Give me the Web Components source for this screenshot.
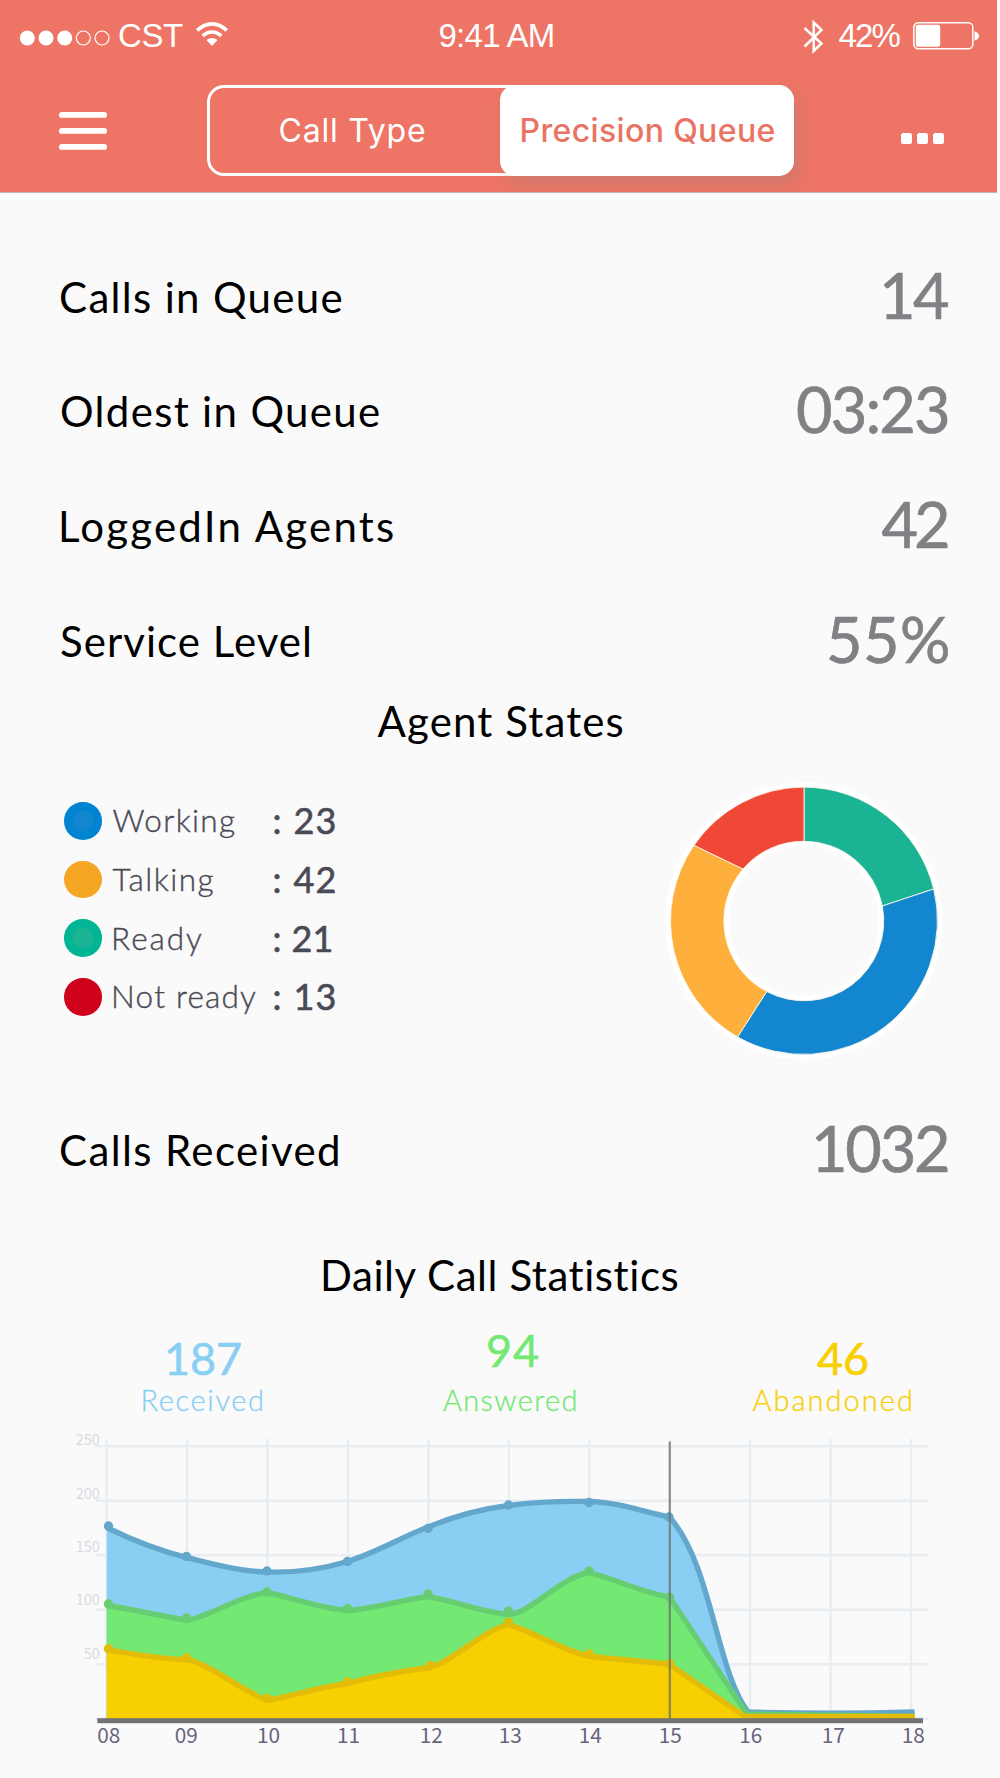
<!DOCTYPE html>
<html lang="en">
<head>
<meta charset="utf-8">
<title>Precision Queue</title>
<style>
  body {
    background: #fafafa;
    font-family: Lato, "Liberation Sans", sans-serif;
    margin: 0;
  }
</style>
</head>
<body>
<queue-app></queue-app>

<script>
// Text set to an exact ink width by tracking
// <fit-text width="281" size="42" weight="400">Label</fit-text>
class FitText extends HTMLElement {
  constructor() {
    super();

    const template = document.createElement( 'template' );
    template.innerHTML = /* template */ `
      <style>
        :host {
          display: block;
          flex: none;
          white-space: nowrap;
        }

        span { display: block; }
      </style>
      <span><slot></slot></span>
    `;

    // Root
    this.attachShadow( {mode: 'open'} );
    this.shadowRoot.appendChild( template.content.cloneNode( true ) );
    this.$span = this.shadowRoot.querySelector( 'span' );
  }

  // Measure ink, spread the difference between letters
  _render() {
    const text = this.textContent.trim();
    const width = parseFloat( this.getAttribute( 'width' ) );
    const size = this.getAttribute( 'size' ) + 'px';
    const weight = this.getAttribute( 'weight' ) || '400';
    this.style.fontSize = size;
    this.style.fontWeight = weight;

    const context = document.createElement( 'canvas' ).getContext( '2d' );
    context.font = `${weight} ${size} ${getComputedStyle( this ).fontFamily}`;
    const ink = context.measureText( text );
    const natural = ink.actualBoundingBoxLeft + ink.actualBoundingBoxRight;

    this.style.width = width + 'px';
    this.$span.style.letterSpacing = ( width - natural ) / ( text.length - 1 ) + 'px';
    this.$span.style.marginLeft = ink.actualBoundingBoxLeft + 'px';
  }

  // Setup
  connectedCallback() {
    this._render();
  }
}

window.customElements.define( 'fit-text', FitText );

class StatusBar extends HTMLElement {
  constructor() {
    super();

    const template = document.createElement( 'template' );
    template.innerHTML = /* template */ `
      <style>
        :host {
          align-items: center;
          box-sizing: border-box;
          color: #ffffff;
          display: flex;
          font-family: "Liberation Sans", Arial, sans-serif;
          height: 72px;
          line-height: 72px;
          padding: 0 19px 0 19px;
        }

        svg { display: block; flex: none; }
        .signal { margin: 4px 9px 0 0; }
        .wifi { margin: -4px 210.5px 0 12px; }
        .bluetooth { margin: 2px 13.5px 0 248.5px; }
        .battery { margin-left: 12px; }
      </style>
      <svg class="signal" width="91" height="16" viewBox="0 0 91 16" fill="#fff">
        <circle cx="8.3" cy="8" r="7.5"/>
        <circle cx="27" cy="8" r="7.5"/>
        <circle cx="45.7" cy="8" r="7.5"/>
        <g fill="none" stroke="#fff" stroke-width="1.2">
          <circle cx="64.3" cy="8" r="7"/>
          <circle cx="83" cy="8" r="7"/>
        </g>
      </svg>
      <fit-text width="64" size="33">CST</fit-text>
      <svg class="wifi" width="34" height="26" viewBox="0 0 34 26">
        <g fill="none" stroke="#fff" stroke-width="3.6">
          <path d="M2.2 9.4 Q9.4 2.9 17 2.9 T31.8 9.4"/>
          <path d="M7.6 14.8 Q12 11 17 11 T26.4 14.8"/>
        </g>
        <path fill="#fff" d="M11.4 19 Q17 14.8 22.6 19 L17 25Z"/>
      </svg>
      <fit-text width="115" size="33">9:41 AM</fit-text>
      <svg class="bluetooth" width="22" height="36" viewBox="0 0 22 36" fill="none" stroke="#fff" stroke-width="2.5">
        <path d="M1.5 9 L18.5 24.5 L10.7 32 V3.5 L18.5 11 L1.5 27.5"/>
      </svg>
      <fit-text width="62" size="33">42%</fit-text>
      <svg class="battery" width="66" height="28" viewBox="0 0 66 28">
        <rect x=".8" y=".8" width="59" height="26" rx="4.5" fill="none" stroke="#fff" stroke-width="1.5"/>
        <rect x="2.8" y="2.8" width="24.4" height="22" rx="2.2" fill="#fff"/>
        <path d="M61.5 9.3 Q66 11 66 14 T61.5 18.7Z" fill="#fff"/>
      </svg>
    `;

    // Root
    this.attachShadow( {mode: 'open'} );
    this.shadowRoot.appendChild( template.content.cloneNode( true ) );
  }
}

window.customElements.define( 'status-bar', StatusBar );

class NavBar extends HTMLElement {
  constructor() {
    super();

    const template = document.createElement( 'template' );
    template.innerHTML = /* template */ `
      <style>
        :host {
          align-items: flex-start;
          box-sizing: border-box;
          display: flex;
          height: 120px;
          padding: 13px 53px 0 59px;
        }

        button {
          background: none;
          border: none;
          display: block;
          padding: 0;
        }

        svg { display: block; }
        .menu { margin-top: 27px; }
        .more { margin: 48px 0 0 auto; }

        .tabs {
          border: solid 3px #ffffff;
          border-radius: 17px;
          box-sizing: border-box;
          color: #ffffff;
          display: flex;
          font-family: Inter, Lato, sans-serif;
          height: 91px;
          line-height: 86px;
          margin-left: 99.5px;
          width: 587px;
        }

        .tab {
          box-sizing: border-box;
          flex: none;
          padding-left: 70px;
          width: 290.5px;
        }

        .tab.selected {
          background: #ffffff;
          border-radius: 15px;
          box-shadow: 5px 9px 15px 0 rgba( 110, 130, 130, 0.22 );
          color: #e97463;
          height: 91px;
          line-height: 92px;
          margin: -3px -3px -3px 0;
          padding-left: 21.5px;
          width: 293.5px;
        }
      </style>
      <button class="menu" aria-label="Menu">
        <svg width="48" height="38" viewBox="0 0 48 38" fill="#fff">
          <rect width="48" height="5.8" rx="2.9"/>
          <rect y="16" width="48" height="5.8" rx="2.9"/>
          <rect y="32" width="48" height="5.8" rx="2.9"/>
        </svg>
      </button>
      <div class="tabs">
        <div class="tab"><fit-text width="145.5" size="32">Call Type</fit-text></div>
        <div class="tab selected"><fit-text width="253" size="32" weight="500">Precision Queue</fit-text></div>
      </div>
      <button class="more" aria-label="More">
        <svg width="43" height="11" viewBox="0 0 43 11" fill="#fff">
          <rect width="11" height="11" rx="2"/>
          <rect x="16" width="11" height="11" rx="2"/>
          <rect x="32" width="11" height="11" rx="2"/>
        </svg>
      </button>
    `;

    // Root
    this.attachShadow( {mode: 'open'} );
    this.shadowRoot.appendChild( template.content.cloneNode( true ) );
  }
}

window.customElements.define( 'nav-bar', NavBar );

// Label on the left, large figure on the right
class MetricRow extends HTMLElement {
  constructor() {
    super();

    const template = document.createElement( 'template' );
    template.innerHTML = /* template */ `
      <style>
        :host {
          box-sizing: border-box;
          color: #000000;
          display: flex;
          height: 100px;
          justify-content: space-between;
          line-height: 100px;
          padding: 0 52px 0 61px;
        }

        ::slotted( [slot=label] ) { margin-top: 1px; }

        ::slotted( [slot=value] ) {
          -webkit-text-stroke: 0.7px currentColor;
          color: #808184;
          margin-top: -1px;
        }
      </style>
      <slot name="label"></slot>
      <slot name="value"></slot>
    `;

    // Root
    this.attachShadow( {mode: 'open'} );
    this.shadowRoot.appendChild( template.content.cloneNode( true ) );
  }
}

window.customElements.define( 'metric-row', MetricRow );

class LegendItem extends HTMLElement {
  constructor() {
    super();

    const template = document.createElement( 'template' );
    template.innerHTML = /* template */ `
      <style>
        :host {
          align-items: center;
          color: #4a4a55;
          display: flex;
          height: 58.7px;
          line-height: 58.7px;
        }

        .dot {
          background: radial-gradient( circle, var( --inner ) 10px, var( --outer ) 11px );
          border-radius: 50%;
          flex: none;
          height: 37.6px;
          width: 37.6px;
        }

        .label {
          -webkit-text-stroke: 0.4px currentColor;
          box-sizing: border-box;
          flex: none;
          padding-left: var( --indent, 11px );
          width: 173px;
        }

        ::slotted( [slot=value] ) { -webkit-text-stroke: 0.6px currentColor; }
      </style>
      <div class="dot"></div>
      <div class="label"><slot name="label"></slot></div>
      <slot name="value"></slot>
    `;

    // Root
    this.attachShadow( {mode: 'open'} );
    this.shadowRoot.appendChild( template.content.cloneNode( true ) );
  }
}

window.customElements.define( 'legend-item', LegendItem );

class DonutChart extends HTMLElement {
  constructor() {
    super();

    const template = document.createElement( 'template' );
    template.innerHTML = /* template */ `
      <style>
        :host { display: block; flex: none; }
        svg { display: block; }
      </style>
      <svg width="280" height="280" viewBox="-140 -140 280 280">
        <circle r="106.7" fill="none" stroke="#fff" stroke-width="64"/>
        <g stroke="#fdf6e8" stroke-width=".9">
          <path fill="#1ab394" d="M0 -133.9 A133.9 133.9 0 0 1 129.7 -32 L78.3 -15 A79.7 79.7 0 0 0 0 -79.7Z"/>
          <path fill="#1386d0" d="M129.7 -32 A133.9 133.9 0 0 1 -66.5 116 L-37.3 70.5 A79.7 79.7 0 0 0 78.3 -15Z"/>
          <path fill="#ffaf3c" d="M-66.5 116 A133.9 133.9 0 0 1 -110 -75.7 L-61 -52 A79.7 79.7 0 0 0 -37.3 70.5Z"/>
          <path fill="#f04836" d="M-110 -75.7 A133.9 133.9 0 0 1 0 -133.9 V-79.7 A79.7 79.7 0 0 0 -61 -52Z"/>
        </g>
      </svg>
    `;

    // Root
    this.attachShadow( {mode: 'open'} );
    this.shadowRoot.appendChild( template.content.cloneNode( true ) );
  }
}

window.customElements.define( 'donut-chart', DonutChart );

// Figure above its caption
class CallStat extends HTMLElement {
  constructor() {
    super();

    const template = document.createElement( 'template' );
    template.innerHTML = /* template */ `
      <style>
        :host { display: block; flex: none; }

        .value {
          -webkit-text-stroke: 0.6px currentColor;
          display: flex;
          height: 51px;
          line-height: 51px;
          padding-left: var( --indent, 0 );
        }

        .label {
          -webkit-text-stroke: 0.3px currentColor;
          line-height: 32px;
        }
      </style>
      <div class="value"><slot name="value"></slot></div>
      <div class="label"><slot name="label"></slot></div>
    `;

    // Root
    this.attachShadow( {mode: 'open'} );
    this.shadowRoot.appendChild( template.content.cloneNode( true ) );
  }
}

window.customElements.define( 'call-stat', CallStat );

class AreaChart extends HTMLElement {
  constructor() {
    super();

    const template = document.createElement( 'template' );
    template.innerHTML = /* template */ `
      <style>
        :host { display: block; }

        svg {
          display: block;
          font-family: "Noto Sans CJK SC", "Noto Sans", sans-serif;
        }

        .grid { stroke: #e8edf1; stroke-width: 2.4; }
        .scale { fill: #d9d9df; font-size: 14.5px; text-anchor: end; }
        .hours { fill: #67647c; font-size: 20.8px; text-anchor: middle; }
        .line { fill: none; stroke-width: 5.4; }
      </style>
      <svg width="1000" height="364" viewBox="0 1414 1000 364">
        <g class="grid"></g>
        <g class="scale"></g>
        <g class="areas"></g>
        <path d="M669.8 1441.5 V1719" stroke="#6b6b6b" stroke-opacity=".75" stroke-width="2.2"/>
        <rect x="97.3" y="1718.2" width="825.7" height="5" fill="#727272"/>
        <g class="hours"></g>
      </svg>
    `;

    // Root
    this.attachShadow( {mode: 'open'} );
    this.shadowRoot.appendChild( template.content.cloneNode( true ) );
    this._render();
  }

  _render() {
    const hours = [
      ['08', 108.7], ['09', 186.2], ['10', 268.5], ['11', 348.5], ['12', 431.3], ['13', 510.3],
      ['14', 590.3], ['15', 670.3], ['16', 750.8], ['17', 833.3], ['18', 913.3]
    ];
    const scale = [[250, 1445], [200, 1498.7], [150, 1552], [100, 1605], [50, 1658.7]];
    const series = [
      {
        fill: '#89cff3',
        line: '#64a7cd',
        path: 'M106.7 1527.5 C128 1538 160 1551 187 1557.5 C216 1565 240 1571.5 267 1572 C296 1573 322 1569 347.5 1561.5 C375 1553 400 1538 428 1527 C455 1516 480 1509 508.5 1505.5 C535 1502 562 1501 589 1501.5 C617 1502 644 1512 669.5 1517 C712 1565 716 1670 748 1712 C800 1713.5 860 1713.5 914.5 1712',
        dots: [[108.5, 1526], [186.5, 1556.5], [267, 1571], [347.5, 1561.5], [428, 1528.5], [508.5, 1505], [589, 1502.5], [669, 1517]]
      },
      {
        fill: '#73e873',
        line: '#67cd73',
        path: 'M106.7 1605 L187 1620.5 C210 1616 242 1595 267 1592.5 C290 1597 325 1610 350 1610.5 C375 1608 402 1600 428 1596.5 C455 1601 480 1612 508.5 1614.5 C530 1614 562 1576 589 1572.5 C615 1579 644 1593 669.5 1597 L747 1714 L914.5 1716.5',
        dots: [[108.5, 1604], [186.5, 1618], [267, 1592], [347.5, 1608.5], [428, 1594], [508.5, 1611], [589, 1571], [669.5, 1597]]
      },
      {
        fill: '#f8cf00',
        line: '#e2bc08',
        path: 'M106.7 1649.5 C133 1654 160 1659 187 1659.5 C205 1662 242 1690 267 1700.5 C293 1696 320 1687 347.5 1683.5 C375 1676 402 1671 430 1667.5 C450 1663 482 1631 508.5 1624.5 C535 1632 565 1652 589 1656 C615 1659.5 644 1661 669.5 1664.5 L745 1716.5 H914.5',
        dots: [[108.5, 1648.7], [186.5, 1658], [267, 1698.3], [347.5, 1682], [430.5, 1665.5], [508.5, 1622.5], [589, 1654], [669.5, 1663.5]]
      }
    ];

    let grid = '';
    for( let c = 0; c < 11; c++ ) {
      grid += `<path d="M${106.7 + c * 80.43} 1439 V1720"/>`;
    }
    for( let r = 0; r < 6; r++ ) {
      grid += `<path d="M95.5 ${1446.3 + r * 54.5} H928"/>`;
    }

    const root = this.shadowRoot;
    root.querySelector( '.grid' ).innerHTML = grid;
    root.querySelector( '.scale' ).innerHTML = scale
      .map( ( [label, y] ) => `<text x="99.8" y="${y}">${label}</text>` ).join( '' );
    root.querySelector( '.hours' ).innerHTML = hours
      .map( ( [label, x] ) => `<text x="${x}" y="1743.3">${label}</text>` ).join( '' );
    root.querySelector( '.areas' ).innerHTML = series.map( ( item ) => `
      <path d="${item.path} V1719 H106.7Z" fill="${item.fill}"/>
      <path class="line" d="${item.path}" stroke="${item.line}"/>
      ${item.dots.map( ( [x, y] ) => `<circle cx="${x}" cy="${y}" r="4.7" fill="${item.line}"/>` ).join( '' )}
    ` ).join( '' );
  }
}

window.customElements.define( 'area-chart', AreaChart );

class QueueApp extends HTMLElement {
  constructor() {
    super();

    const template = document.createElement( 'template' );
    template.innerHTML = /* template */ `
      <style>
        :host {
          display: flex;
          flex-direction: column;
          height: 1778px;
          overflow: hidden;
          width: 1000px;
        }

        header {
          background: #ee7565;
          border-bottom: solid 1px #c4b4b1;
          height: 192px;
          overflow: hidden;
          width: 997px;
        }

        .metrics {
          display: flex;
          flex-direction: column;
          gap: 14.8px;
          padding-top: 52.6px;
        }

        h2 {
          box-sizing: border-box;
          color: #000000;
          display: flex;
          font-weight: 400;
          height: 60px;
          justify-content: center;
          line-height: 60px;
          margin: 0;
          padding-top: 1.4px;
        }

        .states {
          align-items: flex-start;
          display: flex;
          justify-content: space-between;
          margin-top: 31px;
          padding: 0 55.7px 0 64px;
        }

        .legend { padding-top: 10.4px; }
        .legend legend-item:nth-child( n + 3 ) { --indent: 12.5px; }
        .received { margin-top: 38px; }
        .daily { margin-top: 45px; padding-left: 3px; }

        .stats {
          box-sizing: border-box;
          display: flex;
          height: 110px;
          padding: 29px 0 0 143.5px;
        }

        .stats call-stat:nth-child( 1 ) { --indent: 23.5px; color: #89cff3; }
        .stats call-stat:nth-child( 2 ) { --indent: 45px; color: #73e873; margin-left: 181px; }
        .stats call-stat:nth-child( 3 ) { --indent: 64.5px; color: #f8cf00; margin-left: 177px; }
        .raised { margin-top: -8px; }
      </style>
      <header>
        <status-bar></status-bar>
        <nav-bar></nav-bar>
      </header>
      <section class="metrics">
        <metric-row>
          <fit-text slot="label" width="280.5" size="42">Calls in Queue</fit-text>
          <fit-text slot="value" width="64" size="63">14</fit-text>
        </metric-row>
        <metric-row>
          <fit-text slot="label" width="318" size="42">Oldest in Queue</fit-text>
          <fit-text slot="value" width="151" size="63">03:23</fit-text>
        </metric-row>
        <metric-row>
          <fit-text slot="label" width="333.5" size="42">LoggedIn Agents</fit-text>
          <fit-text slot="value" width="66.5" size="63">42</fit-text>
        </metric-row>
        <metric-row>
          <fit-text slot="label" width="248" size="42">Service Level</fit-text>
          <fit-text slot="value" width="119" size="63">55%</fit-text>
        </metric-row>
      </section>
      <h2><fit-text width="245" size="42">Agent States</fit-text></h2>
      <section class="states">
        <div class="legend">
          <legend-item style="--outer: #0084d1; --inner: #1386d0">
            <fit-text slot="label" width="122.3" size="31.5" weight="300">Working</fit-text>
            <fit-text slot="value" width="60" size="36">: 23</fit-text>
          </legend-item>
          <legend-item style="--outer: #f5a623; --inner: #f5a623">
            <fit-text slot="label" width="101" size="31.5" weight="300">Talking</fit-text>
            <fit-text slot="value" width="60" size="36">: 42</fit-text>
          </legend-item>
          <legend-item style="--outer: #00b494; --inner: #1ab394">
            <fit-text slot="label" width="88" size="31.5" weight="300">Ready</fit-text>
            <fit-text slot="value" width="57" size="36">: 21</fit-text>
          </legend-item>
          <legend-item style="--outer: #d0021b; --inner: #d0021b">
            <fit-text slot="label" width="142" size="31.5" weight="300">Not ready</fit-text>
            <fit-text slot="value" width="60" size="36">: 13</fit-text>
          </legend-item>
        </div>
        <donut-chart></donut-chart>
      </section>
      <metric-row class="received">
        <fit-text slot="label" width="277" size="42">Calls Received</fit-text>
        <fit-text slot="value" width="132" size="63">1032</fit-text>
      </metric-row>
      <h2 class="daily"><fit-text width="357" size="42">Daily Call Statistics</fit-text></h2>
      <section class="stats">
        <call-stat>
          <fit-text slot="value" width="74" size="45">187</fit-text>
          <fit-text slot="label" width="118.5" size="29" weight="300">Received</fit-text>
        </call-stat>
        <call-stat>
          <fit-text slot="value" class="raised" width="50" size="45">94</fit-text>
          <fit-text slot="label" width="132.5" size="29" weight="300">Answered</fit-text>
        </call-stat>
        <call-stat>
          <fit-text slot="value" width="51" size="45">46</fit-text>
          <fit-text slot="label" width="158.5" size="29" weight="300">Abandoned</fit-text>
        </call-stat>
      </section>
      <area-chart></area-chart>
    `;

    // Root
    this.attachShadow( {mode: 'open'} );
    this.shadowRoot.appendChild( template.content.cloneNode( true ) );
  }
}

window.customElements.define( 'queue-app', QueueApp );
</script>
</body>
</html>
